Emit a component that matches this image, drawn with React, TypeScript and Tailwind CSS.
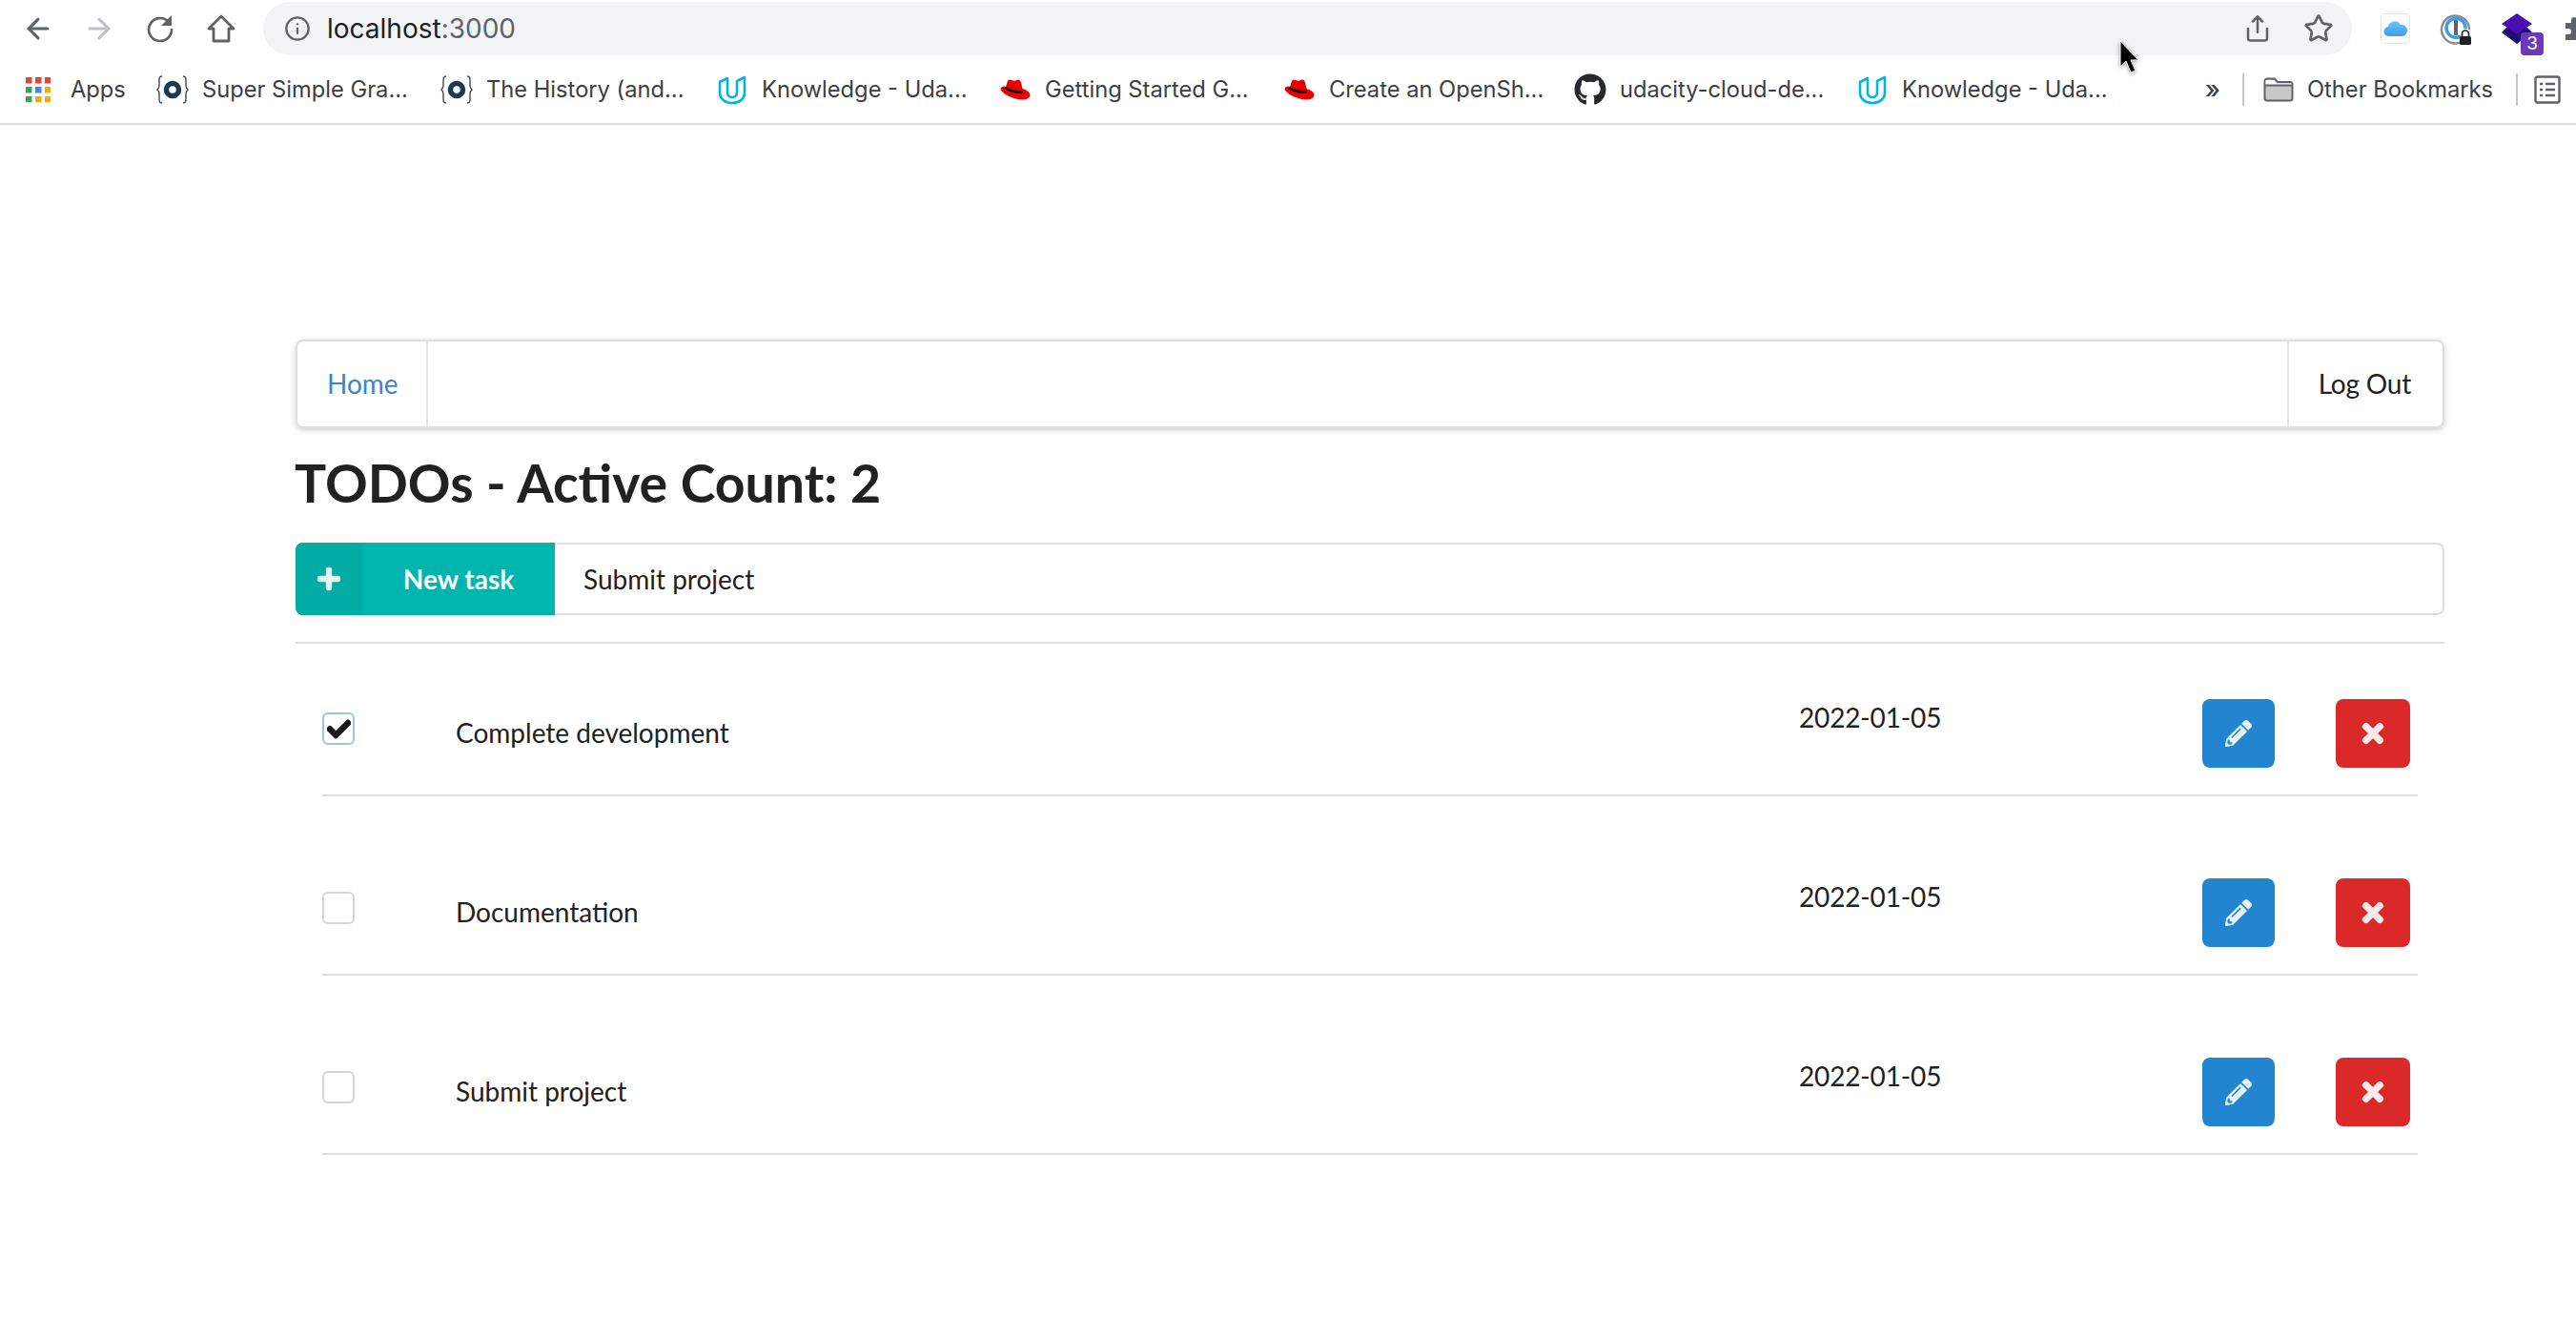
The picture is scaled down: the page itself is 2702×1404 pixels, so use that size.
import { ArrowLeft, ArrowRight, Info, Share, Star } from "lucide-react";
import { FaCheck, FaGithub, FaPencilAlt, FaPlus, FaTimes } from "react-icons/fa";

function AppsIcon() {
  const colors = ["#ea4335", "#ea4335", "#ea4335", "#34a853", "#4285f4", "#f9ab00", "#34a853", "#f9ab00", "#f9ab00"];
  return (
    <svg width="26" height="26" viewBox="0 0 26 26" className="-ml-[6px]">
      {colors.map((c, i) => (
        <rect key={i} x={(i % 3) * 10} y={Math.floor(i / 3) * 10} width="6.5" height="6.5" fill={c} />
      ))}
    </svg>
  );
}

function BraceIcon() {
  return (
    <svg width="34" height="30" viewBox="0 0 34 30" fill="none">
      <path d="M6 1C3 1 3 3 3 6v5c0 2-1 3-2 4 1 1 2 2 2 4v5c0 3 0 5 3 5M28 1c3 0 3 2 3 5v5c0 2 1 3 2 4-1 1-2 2-2 4v5c0 3 0 5-3 5" stroke="#3b4a54" strokeWidth="1.4" />
      <circle cx="17" cy="15" r="6.5" stroke="#1c3a4f" strokeWidth="5.5" />
    </svg>
  );
}

function UdacityIcon() {
  return (
    <svg width="32" height="32" viewBox="0 0 32 32" fill="none" stroke="#02b3e4" strokeWidth="2.6" strokeLinejoin="round">
      <path d="M3 8l8-4v15c0 3 2 5 5 5s5-2 5-5V7l8-4v16c0 7-6 11-13 11S3 26 3 19z" />
    </svg>
  );
}

function RedHatIcon() {
  return (
    <svg width="32" height="22" viewBox="0 0 32 22">
      <path d="M10 .5c1.500 0 3 1.200 5 1.200s2.500-1.200 4-1.200c2 0 3 2 3.500 5l1 4.500c3.500 1.200 8 3.500 8 6.500 0 3-3.500 5-8 5-6 0-12-2-18-5.500C2.500 13.500 .5 11.500 .5 10c0-1.500 2-2.500 4-2.500l1.500.5 1-3c.6-2.500 1.400-4.500 3-4.500z" fill="#ee0000" />
      <path d="M5.500 7.800c4 2.800 12.500 5.200 17.800 3.700l.7 3c-6.500 1.500-15-1-19.500-4.500z" fill="#111" />
    </svg>
  );
}

function FolderIcon() {
  return (
    <svg width="32" height="26" viewBox="0 0 32 26" fill="none">
      <path d="M1.500 4a2.500 2.500 0 0 1 2.500-2.500h8l3 3.500h13a2.500 2.500 0 0 1 2.500 2.500V22a2.500 2.500 0 0 1-2.500 2.500H4A2.500 2.500 0 0 1 1.500 22z" fill="#c8c8c8" stroke="#5f6368" strokeWidth="2" />
      <path d="M2.500 3h9l3 3.500h15V8h-27z" fill="#fff" />
      <path d="M1.500 8.500h29" stroke="#5f6368" strokeWidth="2" />
    </svg>
  );
}

function ListIcon() {
  return (
    <svg width="28" height="30" viewBox="0 0 28 30" fill="none" stroke="#5f6368" strokeWidth="2.4">
      <rect x="1.500" y="1.500" width="25" height="27" rx="2" />
      <path d="M6 9h3M12 9h10M6 15h3M12 15h10M6 21h3M12 21h10" />
    </svg>
  );
}

function ReloadIcon() {
  return (
    <svg width="34" height="34" viewBox="0 0 34 34" fill="none">
      <path d="M25.500 9.500A12 12 0 1 0 29 17" stroke="currentColor" strokeWidth="2.600" />
      <path d="M29 3v11H18z" fill="currentColor" />
    </svg>
  );
}

function HomeIcon() {
  return (
    <svg width="34" height="34" viewBox="0 0 34 34" fill="none" stroke="currentColor" strokeWidth="2.800" strokeLinejoin="round">
      <path d="M17 4L4 17h5v13h16V17h5z" />
    </svg>
  );
}

function CloudExt() {
  return (
    <div className="flex h-[32px] w-[31px] shrink-0 items-center justify-center rounded-[5px] border border-[#e4e4e4] bg-white">
      <svg width="26" height="18" viewBox="0 0 26 18">
        <defs>
          <linearGradient id="cloudFill" x1="0" y1="0" x2="0" y2="1">
            <stop offset="0" stopColor="#6cc4f7" />
            <stop offset="1" stopColor="#3c9cf0" />
          </linearGradient>
        </defs>
        <path d="M6 17a5 5 0 0 1-1-10 7 7 0 0 1 13-2 6 6 0 0 1 2 12z" fill="url(#cloudFill)" />
      </svg>
    </div>
  );
}

function PasswordExt() {
  return (
    <svg width="32" height="32" viewBox="0 0 32 32" fill="none" className="shrink-0 overflow-visible">
      <path d="M26 27A14.500 14.500 0 1 1 30 17" stroke="#8a8d91" strokeWidth="2.500" />
      <path d="M21 24A10 10 0 1 1 26 16" stroke="#3b9cf0" strokeWidth="3.500" />
      <rect x="14" y="7" width="4" height="16" rx="1" fill="#5f6368" />
      <rect x="20" y="24" width="12" height="9" rx="1.500" fill="#222" />
      <path d="M22.500 24v-2.500a3.500 3.500 0 0 1 7 0V24" stroke="#222" strokeWidth="1.700" />
    </svg>
  );
}

function GemExt() {
  return (
    <div className="relative h-[32px] w-[44px] shrink-0">
      <svg width="32" height="32" viewBox="0 0 32 32">
        <path d="M5 15L0 20 16 32 32 20 27 15z" fill="#1f0c78" />
        <path d="M16 0L32 11 16 22 0 11z" fill="#4a0fb0" />
      </svg>
      <span className="absolute left-[20px] top-[20px] flex h-[24px] w-[24px] items-center justify-center rounded-[4px] bg-[#6a3ab8] text-[19px] text-white">
        3
      </span>
    </div>
  );
}

function PuzzleExt() {
  return (
    <svg width="24" height="24" viewBox="0 0 24 24" className="shrink-0">
      <path d="M0 6h6V3a3 3 0 0 1 6 0v3h6v6h-3a3 3 0 0 0 0 6h3v6H0v-6h3a3 3 0 0 0 0-6H0z" fill="#5f6368" />
    </svg>
  );
}

function Cursor() {
  return (
    <svg width="24" height="38" viewBox="0 0 24 38" className="absolute left-[2222px] top-[42px] drop-shadow-[0_1px_2px_rgba(0,0,0,0.4)]">
      <path d="M2 1v27l6-6 5 12 5-2-5-11h8z" fill="#000" stroke="#fff" strokeWidth="1" />
    </svg>
  );
}

const bookmarks = [
  { label: "Apps", icon: <AppsIcon />, width: "w-[138px]" },
  { label: "Super Simple Gra...", icon: <BraceIcon />, width: "w-[298px]" },
  { label: "The History (and...", icon: <BraceIcon />, width: "w-[289px]" },
  { label: "Knowledge - Uda...", icon: <UdacityIcon />, width: "w-[297px]" },
  { label: "Getting Started G...", icon: <RedHatIcon />, width: "w-[298px]" },
  { label: "Create an OpenSh...", icon: <RedHatIcon />, width: "w-[305px]" },
  { label: "udacity-cloud-de...", icon: <FaGithub size={34} color="#24292e" />, width: "w-[296px]" },
  { label: "Knowledge - Uda...", icon: <UdacityIcon />, width: "w-[366px]" },
];

const todos = ["Complete development", "Documentation", "Submit project"];

function BrowserChrome() {
  return (
    <div className="h-[131px] border-b-2 border-[#dcdcdc] font-['Inter',sans-serif] text-[#3c4043]">
      <div className="flex h-[60px] items-start pt-[2px]">
        <div className="flex h-[56px] w-[276px] shrink-0 items-center gap-[30px] pl-[23px] text-[#5f6368]">
          <ArrowLeft size={34} strokeWidth={2.2} />
          <ArrowRight size={34} strokeWidth={2.2} className="text-[#bdc1c6]" />
          <ReloadIcon />
          <HomeIcon />
        </div>
        <div className="flex h-[56px] w-[2191px] shrink-0 items-center rounded-full bg-[#f1f3f4] pl-[22px] pr-[19px]">
          <Info size={28} className="text-[#5f6368]" />
          <span className="ml-[17px] text-[28px] text-[#202124]">
            localhost<span className="text-[#5f6368]">:3000</span>
          </span>
          <div className="ml-auto flex items-center gap-[33px] text-[#5f6368]">
            <Share size={30} strokeWidth={2} />
            <Star size={32} strokeWidth={2} />
          </div>
        </div>
        <div className="flex h-[56px] items-center pl-[30px]">
          <CloudExt />
          <div className="ml-[32px]">
            <PasswordExt />
          </div>
          <div className="ml-[32px]">
            <GemExt />
          </div>
          <div className="ml-[23px]">
            <PuzzleExt />
          </div>
        </div>
      </div>
      <div className="flex h-[67px] items-center pl-[26px] text-[23.7px]">
        {bookmarks.map((b, i) => (
          <div key={i} className={`flex shrink-0 items-center gap-[14px] whitespace-nowrap ${b.width}`}>
            <span className="flex w-[34px] justify-center">{b.icon}</span>
            <span>{b.label}</span>
          </div>
        ))}
        <span className="w-[39px] shrink-0 text-[26px] font-medium">»</span>
        <div className="h-[34px] w-[2px] shrink-0 bg-[#c8c8c8]" />
        <div className="ml-[20px] flex shrink-0 items-center gap-[14px] whitespace-nowrap">
          <FolderIcon />
          <span>Other Bookmarks</span>
        </div>
        <div className="ml-[24px] h-[34px] w-[2px] shrink-0 bg-[#c8c8c8]" />
        <div className="ml-[17px] shrink-0">
          <ListIcon />
        </div>
      </div>
    </div>
  );
}

function TodoRow({ title }: { title: string }) {
  return (
    <div className="mb-[28px] flex h-[160px] border-b-2 border-[#dedede] pr-[8px]">
      <div className="w-[140px] shrink-0 pt-[72px]">
        {title === "Complete development" ? (
          <div className="flex h-[34px] w-[34px] items-center justify-center rounded-[6px] border-2 border-[#96c8da] bg-white text-[#1a1a1a]">
            <FaCheck size={25} stroke="currentColor" strokeWidth={30} />
          </div>
        ) : (
          <div className="h-[34px] w-[34px] rounded-[6px] border-2 border-[#d4d4d5] bg-white" />
        )}
      </div>
      <div className="flex-1 pt-[73px]">{title}</div>
      <div className="w-[423px] shrink-0 pt-[57px] tracking-[-0.15px]">2022-01-05</div>
      <div className="flex shrink-0 gap-[64px] pt-[58px]">
        <button className="flex h-[72px] w-[76px] items-center justify-center rounded-[8px] bg-[#2185d0] text-white">
          <FaPencilAlt size={28} className="opacity-90" />
        </button>
        <button className="flex h-[72px] w-[78px] items-center justify-center rounded-[8px] bg-[#db2828] text-white">
          <FaTimes size={30} stroke="currentColor" strokeWidth={30} className="opacity-90" />
        </button>
      </div>
    </div>
  );
}

export default function App() {
  return (
    <div className="relative h-[1404px] w-[2702px] overflow-hidden bg-white font-['Lato',sans-serif] text-[28px] leading-[40px] text-[#212121]">
      <BrowserChrome />
      <Cursor />
      <main className="ml-[310px] mt-[225px] w-[2254px]">
        <nav className="flex h-[93px] items-stretch rounded-[8px] border-2 border-[#dedede] shadow-[0_2px_4px_rgba(34,36,38,0.12),0_2px_8px_rgba(34,36,38,0.1)]">
          <a className="flex w-[137px] items-center border-r-2 border-[#e6e6e6] pb-[2px] pl-[31px] text-[#4183c4]">Home</a>
          <a className="ml-auto flex items-center border-l-2 border-[#e6e6e6] pb-[2px] pl-[31px] pr-[33px] tracking-[-0.2px]">Log Out</a>
        </nav>
        <h1 className="-ml-[1px] mt-[21px] text-[55.4px] font-bold leading-[72px]">TODOs - Active Count: 2</h1>
        <form className="mt-[27px] flex h-[76px]">
          <button type="button" className="flex w-[272px] shrink-0 rounded-l-[8px] bg-[#00b5ad] font-bold text-white">
            <span className="flex h-full w-[70px] items-center justify-center rounded-l-[8px] bg-[#00aca4]">
              <FaPlus size={26} stroke="currentColor" strokeWidth={30} className="opacity-90" />
            </span>
            <span className="flex h-full flex-1 items-center justify-center">New task</span>
          </button>
          <input
            defaultValue="Submit project"
            className="min-w-0 flex-1 rounded-r-[8px] border-2 border-l-0 border-[#dedede] bg-white pl-[30px] text-[#212121] outline-none"
          />
        </form>
        <div className="mt-[28px] border-t-2 border-[#dedede] px-[28px]">
          {todos.map((t) => (
            <TodoRow key={t} title={t} />
          ))}
        </div>
      </main>
    </div>
  );
}
